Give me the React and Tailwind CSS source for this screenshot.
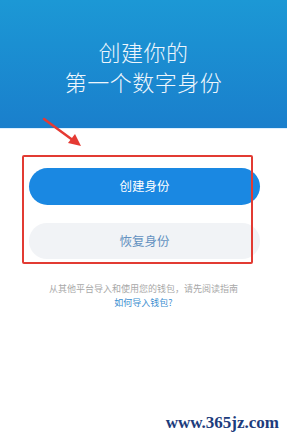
export default function App() {
  const cjk = { fontFamily: '"Noto Sans CJK SC", "Noto Sans", sans-serif' };
  return (
    <div className="relative w-[287px] h-[438px] bg-white overflow-hidden" style={cjk}>
      <div className="h-[128px] bg-gradient-to-b from-[#1c98d5] to-[#1a7fcc] flex flex-col items-center pt-[36px] text-[#eef6fc] text-[22px] leading-[30px] font-light tracking-[0.5px]">
        <div>创建你的</div>
        <div>第一个数字身份</div>
      </div>
      <div className="h-px bg-[#dcefff]" />
      <div className="flex flex-col ml-[29px] w-[231px] mt-[39px] gap-[18px]">
        <div className="h-[37px] rounded-full bg-[#1a88e2] flex items-center justify-center text-white text-[12.5px]">
          创建身份
        </div>
        <div className="h-[36px] rounded-full bg-[#f1f3f6] flex items-center justify-center text-[#6391c0] text-[12.5px]">
          恢复身份
        </div>
      </div>
      <div className="mt-[23px] flex flex-col items-center text-[9px] leading-[14px]">
        <div className="text-[#a8a8a8]">从其他平台导入和使用您的钱包，请先阅读指南</div>
        <div className="text-[#3d8fd0]">如何导入钱包?</div>
      </div>

      {/* annotation overlays */}
      <div className="absolute left-[22px] top-[155px] w-[231px] h-[109px] border-2 border-[#e23b33] rounded-[2px]" />
      <svg className="absolute left-0 top-0" width="287" height="160" viewBox="0 0 287 160">
        <line x1="44" y1="119" x2="74" y2="141" stroke="#e53a33" strokeWidth="2.5" strokeLinecap="round" />
        <polygon points="81,146 68,143 75,134" fill="#e53a33" />
      </svg>
      <div
        className="absolute right-[8px] bottom-[7px] text-[17px] font-bold text-[#1d3c7c] leading-none"
        style={{ fontFamily: '"Liberation Serif", serif' }}
      >
        www.365jz.com
      </div>
    </div>
  );
}
